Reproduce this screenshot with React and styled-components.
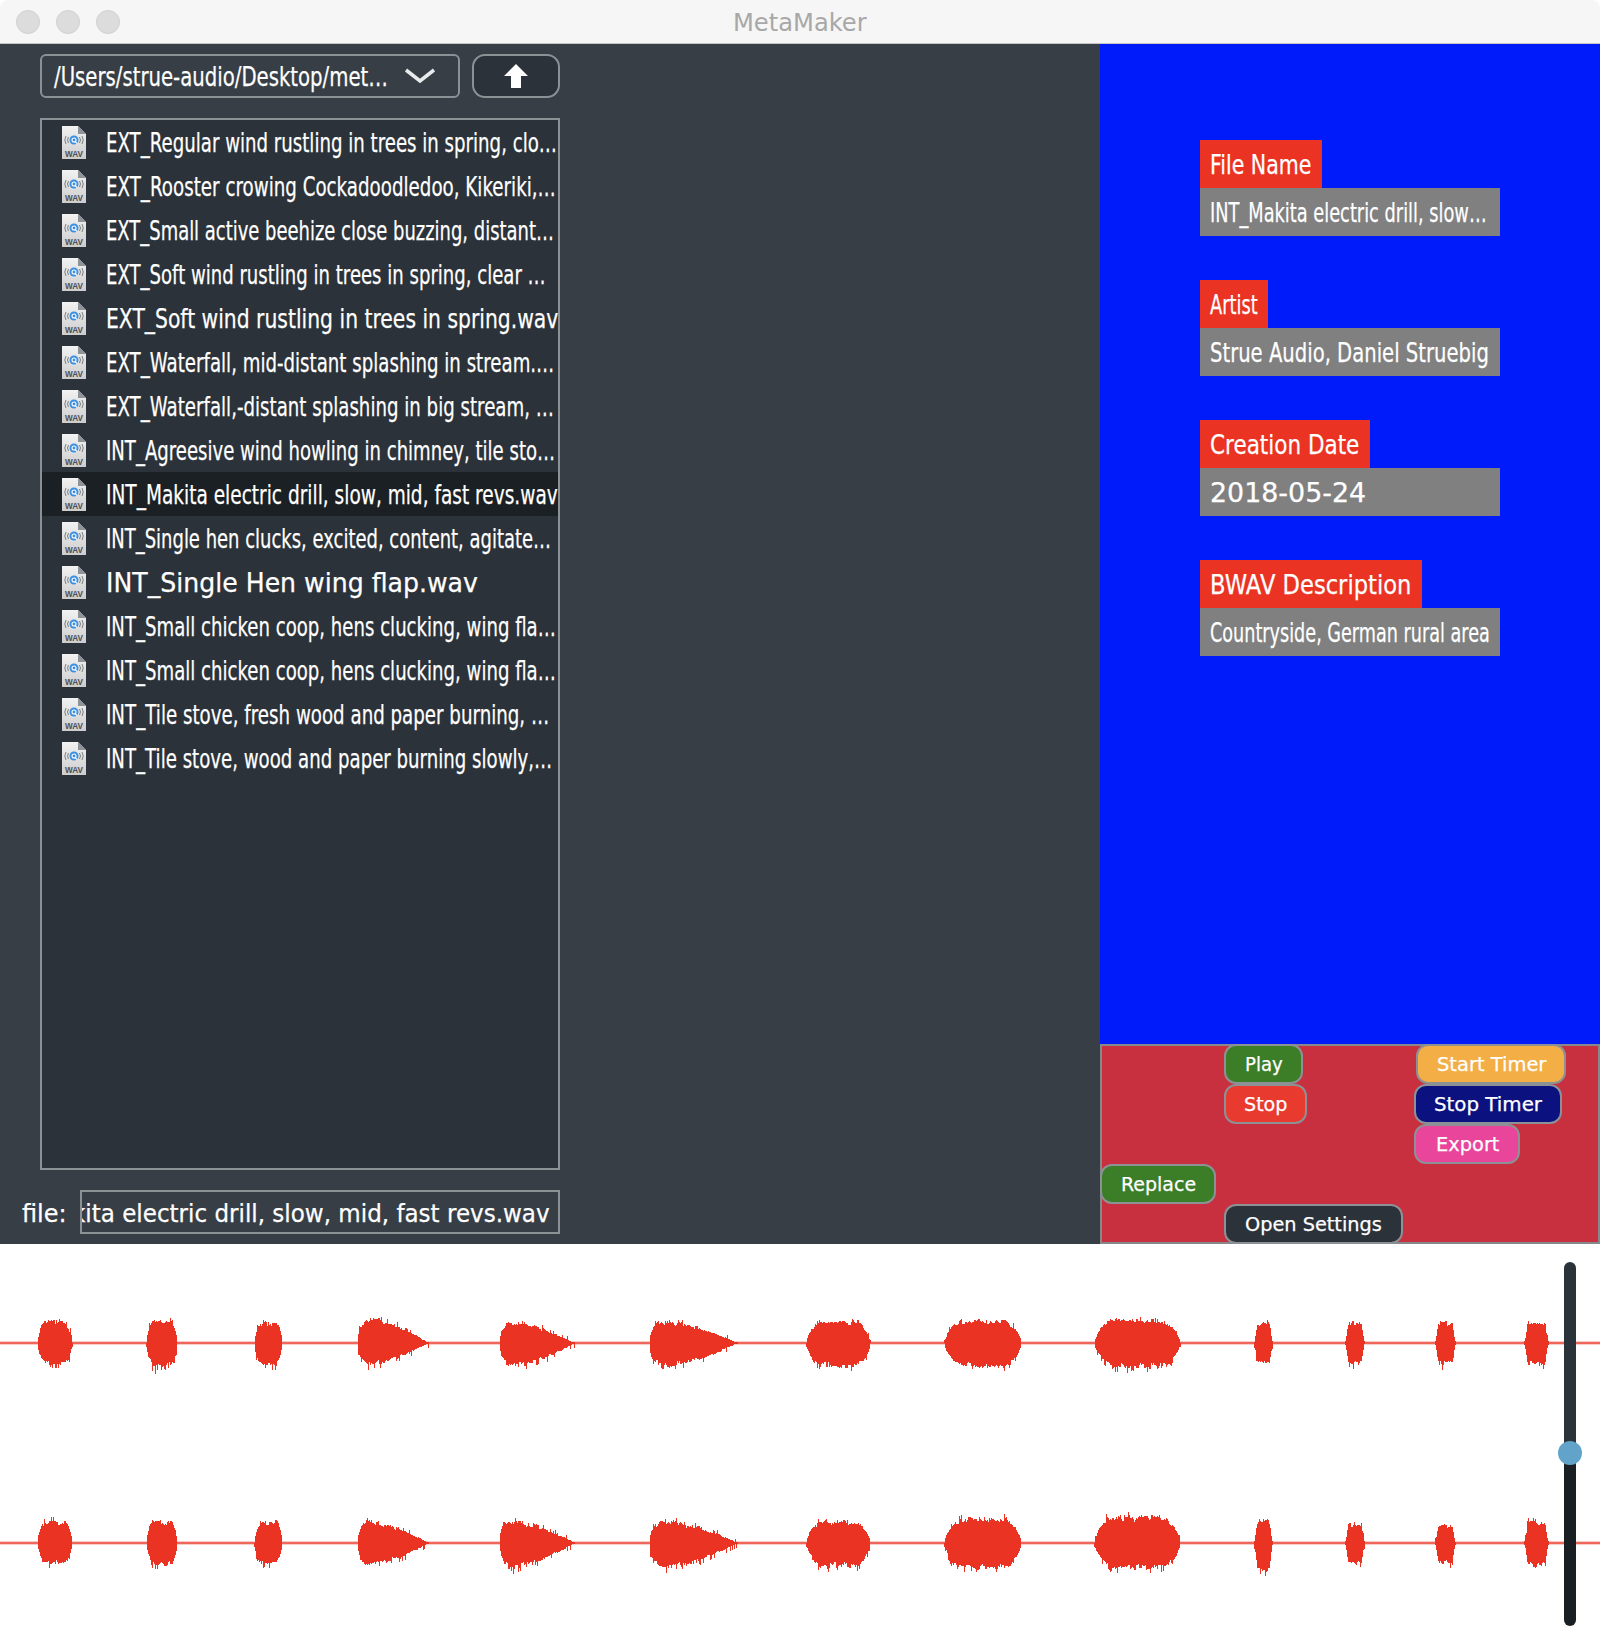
import { useLayoutEffect, useRef, useState } from "react";
import styled, { createGlobalStyle } from "styled-components";

const Global = createGlobalStyle`
    html, body {
        margin: 0;
        padding: 0;
        background: #ffffff;
    }
    * {
        box-sizing: border-box;
    }
`;

const Window = styled.div`
    width: 1600px;
    height: 1644px;
    display: flex;
    flex-direction: column;
    overflow: hidden;
    font-family: "DejaVu Sans", sans-serif;
    color: #ffffff;
    -webkit-text-stroke: 0.25px;
`;

const TitleBar = styled.div`
    position: relative;
    height: 44px;
    flex: none;
    display: flex;
    align-items: center;
    justify-content: center;
    padding-top: 1px;
    background: #f6f6f6;
    border-bottom: 1px solid #c4c4c4;
    border-radius: 8px 8px 0 0;
    color: #a8a8a8;
    font-size: 24px;
    -webkit-text-stroke: 0;
`;

const Lights = styled.div`
    position: absolute;
    left: 16px;
    top: 10px;
    display: flex;
    gap: 16px;
`;

const Light = styled.span`
    width: 24px;
    height: 24px;
    border-radius: 50%;
    background: #dcdcdc;
    border: 1px solid #d0d0d0;
`;

const Main = styled.div`
    height: 1200px;
    flex: none;
    display: flex;
`;

const LeftPane = styled.div`
    width: 1100px;
    flex: none;
    background: #373e45;
    padding: 10px 0 0 22px;
`;

const Toolbar = styled.div`
    display: flex;
    gap: 12px;
    height: 44px;
    margin-left: 18px;
    width: 520px;
`;

const Combo = styled.div`
    width: 420px;
    display: flex;
    align-items: center;
    padding-left: 12px;
    border: 2px solid #8b9195;
    border-radius: 6px;
    font-size: 26px;
`;

const Chevron = styled.svg`
    width: 32px;
    height: 16px;
    margin-left: 16px;
    flex: none;
`;

const UpButton = styled.div`
    width: 88px;
    display: flex;
    align-items: center;
    justify-content: center;
    background: #2c3239;
    border: 2px solid #8b9195;
    border-radius: 13px;
`;

const FileList = styled.div`
    width: 520px;
    height: 1052px;
    margin: 20px 0 0 18px;
    background: #2c3239;
    border: 2px solid #8b9195;
    overflow: hidden;
`;

const Row = styled.div`
    height: 44px;
    display: flex;
    align-items: center;
    padding-left: 19px;
    gap: 19px;
    font-size: 26px;
    background: ${(p) => (p.$selected ? "#1b2024" : "transparent")};
`;

const FileRow = styled.div`
    display: flex;
    align-items: center;
    height: 44px;
    margin-top: 20px;
    width: 538px;
    font-size: 25px;
`;

const FileLabel = styled.div`
    width: 58px;
    flex: none;
`;

const FileInput = styled.div`
    width: 480px;
    height: 44px;
    display: flex;
    align-items: center;
    justify-content: flex-end;
    padding-right: 8px;
    border: 2px solid #8b9195;
    overflow: hidden;
    font-size: 25px;
`;

const RightColumn = styled.div`
    width: 500px;
    flex: none;
    display: flex;
    flex-direction: column;
`;

const MetaPanel = styled.div`
    height: 1000px;
    flex: none;
    background: #001bf9;
    padding: 96px 0 0 100px;
    display: flex;
    flex-direction: column;
    gap: 44px;
`;

const Field = styled.div`
    display: flex;
    flex-direction: column;
    align-items: flex-start;
`;

const FieldLabel = styled.div`
    height: 48px;
    width: ${(p) => p.$w}px;
    display: flex;
    align-items: center;
    padding-left: 10px;
    background: #ea3323;
    font-size: 26px;
`;

const FieldValue = styled.div`
    height: 48px;
    width: 300px;
    display: flex;
    align-items: center;
    padding-left: 10px;
    background: #808080;
    font-size: 26px;
`;

const ButtonPanel = styled.div`
    height: 200px;
    flex: none;
    background: #c83040;
    box-shadow: inset 0 0 0 2px #85898c;
    display: grid;
    grid-template-columns: 124px 190px 1fr;
    grid-template-rows: repeat(5, 40px);
`;

const PanelButton = styled.div`
    grid-column: ${(p) => p.$col};
    grid-row: ${(p) => p.$row};
    width: ${(p) => p.$w}px;
    height: 40px;
    margin-left: ${(p) => p.$nudge || 0}px;
    justify-self: start;
    display: flex;
    align-items: center;
    justify-content: center;
    padding-bottom: 3px;
    background: ${(p) => p.$bg};
    border: 2px solid #8b9195;
    border-radius: 12px;
    font-size: 20px;
`;

const WaveArea = styled.div`
    position: relative;
    height: 400px;
    flex: none;
    background: #ffffff;
`;

const WaveSvg = styled.svg`
    display: block;
    width: 1600px;
    height: 400px;
`;

const SliderTrack = styled.div`
    position: absolute;
    left: 1564px;
    top: 18px;
    width: 12px;
    height: 364px;
    border-radius: 6px;
    background: linear-gradient(to bottom, #2a323a 0 53%, #1a1f23 53% 100%);
`;

const SliderThumb = styled.div`
    position: absolute;
    left: -6px;
    top: 179px;
    width: 24px;
    height: 24px;
    border-radius: 50%;
    background: #62a4c9;
`;

const FitOuter = styled.span`
    display: inline-block;
    flex: none;
    width: ${(p) => p.$w}px;
    padding-top: 3px;
    white-space: nowrap;
    line-height: 1.2;
`;

const FitInner = styled.span`
    display: inline-block;
    transform-origin: left center;
`;

function Fit({ w, children }) {
    const ref = useRef(null);
    const [scale, setScale] = useState(1);

    useLayoutEffect(() => {
        setScale(w / ref.current.offsetWidth);
    }, [w, children]);

    return (
        <FitOuter $w={w}>
            <FitInner ref={ref} style={{ transform: `scaleX(${scale})` }}>{children}</FitInner>
        </FitOuter>
    );
}

function WavIcon() {
    return (
        <svg width="26" height="33" viewBox="0 0 26 33" style={{ flex: "none" }}>
            <defs>
                <linearGradient id="wavPage" x1="0" y1="0" x2="0" y2="1">
                    <stop offset="0" stopColor="#f2f2f2" />
                    <stop offset="1" stopColor="#cdcdcd" />
                </linearGradient>
            </defs>
            <path d="M1 0 H17 L25 8 V33 H1 Z" fill="url(#wavPage)" />
            <path d="M17 0 V8 H25 Z" fill="#8f9397" />
            <path d="M5 10 Q2.5 14 5 18 M7.5 11 Q5.5 14 7.5 17 M21 10 Q23.5 14 21 18 M18.5 11 Q20.5 14 18.5 17" stroke="#7d7f82" strokeWidth="1" fill="none" />
            <circle cx="13" cy="14" r="4.5" fill="#3d8fe0" />
            <circle cx="13" cy="14" r="2" fill="none" stroke="#ffffff" strokeWidth="1.1" />
            <path d="M14 15.5 L16 17.5" stroke="#ffffff" strokeWidth="1.1" />
            <text x="13" y="31" textAnchor="middle" textLength="18" lengthAdjust="spacingAndGlyphs" fontFamily="Liberation Sans, sans-serif" fontWeight="700" fontSize="9" fill="#4c4e52" stroke="none">WAV</text>
        </svg>
    );
}

// x0, x1, shape (0 round, 1 decaying, 2 short burst), up and down amplitude of each channel
const BLOBS = [
    [37, 72, 0, 24, 23, 24, 23],
    [146, 177, 0, 24, 26, 24, 24],
    [254, 282, 0, 22, 25, 24, 22],
    [358, 428, 1, 27, 24, 24, 25],
    [500, 574, 1, 24, 26, 25, 27],
    [650, 737, 1, 24, 26, 25, 28],
    [806, 870, 0, 24, 26, 24, 26],
    [944, 1021, 0, 25, 26, 27, 28],
    [1094, 1180, 0, 26, 27, 29, 28],
    [1254, 1272, 2, 24, 23, 26, 30],
    [1345, 1364, 2, 23, 24, 22, 24],
    [1435, 1455, 2, 24, 24, 20, 24],
    [1524, 1548, 2, 23, 24, 24, 27],
];

function makeRandom(seed) {
    let s = seed;
    return () => {
        s = (s * 16807) % 2147483647;
        return s / 2147483647;
    };
}

function envelope(t, shape) {
    if (shape === 1) {
        if (t < 0.12) return 0.4 + 0.6 * Math.sqrt(t / 0.12);
        return Math.max(0.03, 1 - Math.pow((t - 0.12) / 0.88, 1.7));
    }
    const c = Math.abs(t * 2 - 1);
    if (shape === 2) {
        return c > 0.75 ? Math.max(0.08, (1 - c) * 3.2) : 1 - c * 0.08;
    }
    return Math.min(1, 1.15 * Math.pow(1 - Math.pow(c, 3.2), 0.7));
}

function wavePath(center, upIdx, seed) {
    const rnd = makeRandom(seed);
    let d = "";
    BLOBS.forEach((b) => {
        const [x0, x1, shape] = b;
        let slowUp = 1;
        let slowDown = 1;
        for (let x = x0; x <= x1; x++) {
            if ((x - x0) % 3 === 0) {
                slowUp = 0.8 + rnd() * 0.2;
                slowDown = 0.8 + rnd() * 0.2;
            }
            const e = envelope((x - x0) / (x1 - x0), shape);
            const up = b[upIdx] * e * (slowUp * 0.9 + rnd() * 0.1) + (rnd() < 0.1 ? 3 : 0);
            const down = b[upIdx + 1] * e * (slowDown * 0.9 + rnd() * 0.1) + (rnd() < 0.14 ? 4 : 0);
            d += `M${x + 0.5} ${(center - up).toFixed(0)}V${(center + down).toFixed(0)}`;
        }
    });
    return d;
}

const TOP_WAVE = wavePath(99, 3, 4711) + "M155.5 99V130M275.5 99V126M368.5 99V126";
const BOTTOM_WAVE = wavePath(299, 5, 90210) + "M1106.5 299V270M1265.5 299V332";

const FILES = [
    ["EXT_Regular wind rustling in trees in spring, clo…", 451],
    ["EXT_Rooster crowing Cockadoodledoo, Kikeriki,…", 450],
    ["EXT_Small active beehize close buzzing, distant…", 448],
    ["EXT_Soft wind rustling in trees in spring, clear …", 440],
    ["EXT_Soft wind rustling in trees in spring.wav", 452],
    ["EXT_Waterfall, mid-distant splashing in stream.…", 448],
    ["EXT_Waterfall,-distant splashing in big stream, …", 448],
    ["INT_Agreesive wind howling in chimney, tile sto…", 449],
    ["INT_Makita electric drill, slow, mid, fast revs.wav", 452],
    ["INT_Single hen clucks, excited, content, agitate…", 445],
    ["INT_Single Hen wing flap.wav", 372],
    ["INT_Small chicken coop, hens clucking, wing fla…", 450],
    ["INT_Small chicken coop, hens clucking, wing fla…", 450],
    ["INT_Tile stove, fresh wood and paper burning, …", 443],
    ["INT_Tile stove, wood and paper burning slowly,…", 446],
];

const FIELDS = [
    { label: "File Name", boxW: 122, labelW: 101, value: "INT_Makita electric drill, slow…", valueW: 277 },
    { label: "Artist", boxW: 68, labelW: 48, value: "Strue Audio, Daniel Struebig", valueW: 279 },
    { label: "Creation Date", boxW: 170, labelW: 149, value: "2018-05-24", valueW: 156 },
    { label: "BWAV Description", boxW: 222, labelW: 201, value: "Countryside, German rural area", valueW: 280 },
];

const BUTTONS = [
    { text: "Play", textW: 38, col: 2, row: 1, w: 79, bg: "#3c7d27" },
    { text: "Stop", textW: 43, col: 2, row: 2, w: 83, bg: "#e83a2e" },
    { text: "Start Timer", textW: 109, col: 3, row: 1, w: 150, bg: "#f3ae45", nudge: 2 },
    { text: "Stop Timer", textW: 108, col: 3, row: 2, w: 148, bg: "#0b1280" },
    { text: "Export", textW: 63, col: 3, row: 3, w: 106, bg: "#e9459b" },
    { text: "Replace", textW: 75, col: 1, row: 4, w: 116, bg: "#3c7d27" },
    { text: "Open Settings", textW: 137, col: 2, row: 5, w: 179, bg: "#2c3239" },
];

export default function App() {
    return (
        <Window>
            <Global />
            <TitleBar>
                <Lights>
                    <Light />
                    <Light />
                    <Light />
                </Lights>
                <Fit w={134}>MetaMaker</Fit>
            </TitleBar>
            <Main>
                <LeftPane>
                    <Toolbar>
                        <Combo>
                            <Fit w={334}>/Users/strue-audio/Desktop/met…</Fit>
                            <Chevron viewBox="0 0 32 16">
                                <path d="M2 2 L16 13 L30 2" fill="none" stroke="#e8eaeb" strokeWidth="3.5" />
                            </Chevron>
                        </Combo>
                        <UpButton>
                            <svg width="24" height="24" viewBox="0 0 24 24">
                                <path d="M12 0 L24 12 H17 V24 H7 V12 H0 Z" fill="#ffffff" />
                            </svg>
                        </UpButton>
                    </Toolbar>
                    <FileList>
                        {FILES.map(([name, w], i) => (
                            <Row key={i} $selected={i === 8}>
                                <WavIcon />
                                <Fit w={w}>{name}</Fit>
                            </Row>
                        ))}
                    </FileList>
                    <FileRow>
                        <FileLabel><Fit w={45}>file:</Fit></FileLabel>
                        <FileInput>
                            <Fit w={478}>kita electric drill, slow, mid, fast revs.wav</Fit>
                        </FileInput>
                    </FileRow>
                </LeftPane>
                <RightColumn>
                    <MetaPanel>
                        {FIELDS.map((f) => (
                            <Field key={f.label}>
                                <FieldLabel $w={f.boxW}><Fit w={f.labelW}>{f.label}</Fit></FieldLabel>
                                <FieldValue><Fit w={f.valueW}>{f.value}</Fit></FieldValue>
                            </Field>
                        ))}
                    </MetaPanel>
                    <ButtonPanel>
                        {BUTTONS.map((b) => (
                            <PanelButton key={b.text} $col={b.col} $row={b.row} $w={b.w} $bg={b.bg} $nudge={b.nudge}>
                                <Fit w={b.textW}>{b.text}</Fit>
                            </PanelButton>
                        ))}
                    </ButtonPanel>
                </RightColumn>
            </Main>
            <WaveArea>
                <WaveSvg viewBox="0 0 1600 400">
                    <rect x="0" y="97.5" width="1600" height="3" fill="#f59a92" />
                    <rect x="0" y="98.5" width="1600" height="1" fill="#ea3323" />
                    <rect x="0" y="297.5" width="1600" height="3" fill="#f59a92" />
                    <rect x="0" y="298.5" width="1600" height="1" fill="#ea3323" />
                    <path d={TOP_WAVE} stroke="#ea3323" strokeWidth="1" fill="none" shapeRendering="crispEdges" />
                    <path d={BOTTOM_WAVE} stroke="#ea3323" strokeWidth="1" fill="none" shapeRendering="crispEdges" />
                </WaveSvg>
                <SliderTrack>
                    <SliderThumb />
                </SliderTrack>
            </WaveArea>
        </Window>
    );
}
